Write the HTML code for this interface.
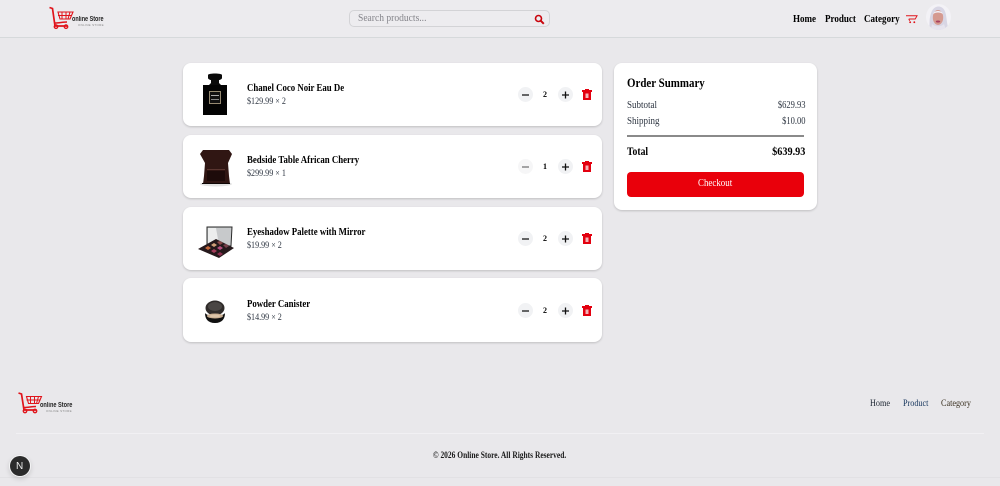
<!DOCTYPE html>
<html lang="en"><head><meta charset="utf-8"><title>Online Store</title>
<style>
*{box-sizing:border-box}
html,body{margin:0;padding:0}
body{width:1000px;height:486px;overflow:hidden;background:#e9e8eb;position:relative;font-family:"Liberation Serif",serif;color:#000}
.t{position:absolute;white-space:nowrap;line-height:1;transform-origin:0 50%}
.r{transform-origin:100% 50%}
header{position:absolute;left:0;top:0;width:1000px;height:38px;background:#ecebee;border-bottom:1px solid #d6d9db}
.search{position:absolute;left:349px;top:10px;width:201px;height:17px;border:1px solid #d3d3d6;border-radius:5px;background:#edecef}
.card{position:absolute;left:183px;width:419px;background:#fff;border-radius:8px;box-shadow:0 1px 2px rgba(0,0,0,.18)}
.sum{position:absolute;left:614px;top:63px;width:203px;height:147px;background:#fff;border-radius:8px;box-shadow:0 1px 2px rgba(0,0,0,.18)}
.n{font-weight:700;font-size:10px;transform:scaleX(.88)}
.p{font-size:9.5px;color:#2c3440;transform:scaleX(.85)}
.b{position:absolute;width:15px;height:15px;border-radius:50%;background:#f1f2f4}
svg{position:absolute;display:block}
.rule{position:absolute;height:1px;background:#f1f0f3}
.q{font-size:8px;font-weight:700}
</style></head><body>
<header></header>
<svg style="left:48px;top:6px" width="26" height="24" viewBox="0 0 26 24" fill="none" stroke="#e0141b"><path d="M1.500 1.500l3 1 2.500 17.500h12" stroke-width="1.700"/><path d="M7 17c4 0 8-1 12-1" stroke-width="1.500"/><path d="M10 6h15l-3 7H12z" stroke-width="1.100"/><path d="M14 6l0 7M18 6l0 7M22 6l-2 7M10 9.500h14" stroke-width="1"/><circle cx="8" cy="20.700" r="1.700" stroke-width="1.400"/><circle cx="18" cy="20.700" r="1.700" stroke-width="1.400"/></svg>
<span class="t" style="left:72px;top:16px;font:700 7px 'Liberation Sans',sans-serif;color:#222;transform:scaleX(.78)">online Store</span>
<span class="t" style="left:78px;top:23px;font:3px 'Liberation Sans',sans-serif;color:#888;letter-spacing:.3px">ONLINE STORE</span>
<div class="search"></div>
<span class="t" style="left:358px;top:14px;font-size:10.500px;color:#85858b;transform:scaleX(.91)">Search products...</span>
<svg style="left:534px;top:14px" width="11" height="11" viewBox="0 0 11 11" fill="none" stroke="#c9060e" stroke-width="1.600"><circle cx="4.500" cy="4.500" r="3"/><path d="M6.800 6.800l3 3" stroke-width="2"/></svg>
<span class="t n" style="left:793px;top:15px;font-size:10.500px;transform:scaleX(.86)">Home</span>
<span class="t n" style="left:825px;top:15px;font-size:10.500px;transform:scaleX(.86)">Product</span>
<span class="t n" style="left:864px;top:15px;font-size:10.500px;transform:scaleX(.86)">Category</span>
<svg style="left:906px;top:14px" width="12" height="10" viewBox="0 0 13 10" fill="none" stroke="#e0141b"><path d="M0 1.500h12L10 5H3" stroke-width="1"/><path d="M3 5l1 2" stroke-width="1"/><circle cx="4.500" cy="8.500" r="1" fill="#e0141b" stroke="none"/><circle cx="9" cy="8.500" r="1" fill="#e0141b" stroke="none"/></svg>
<svg style="left:926px;top:4px" width="25" height="26" viewBox="0 0 25 26"><defs><clipPath id="c"><ellipse cx="12.500" cy="13" rx="12.500" ry="13"/></clipPath></defs><g clip-path="url(#c)"><rect width="25" height="26" fill="#f3f2f6"/><path d="M3 26c1-6 0-10 1.500-15C6 5 9 2.500 12.500 2.500S19 5 20 11c1 6 1 10 3 15z" fill="#d8d6e4"/><ellipse cx="12" cy="13.500" rx="5.200" ry="7.500" fill="#d59a90"/><path d="M7 10c1-4 9-4 10 0-3-2-7-2-10 0z" fill="#f1eff5"/><ellipse cx="12" cy="17.500" rx="2.200" ry="1" fill="#a83f5f"/><path d="M6 20c3 3 9 3 12 0l2 6H5z" fill="#e6e4ee"/></g></svg>

<div class="card" style="top:63px;height:63px"></div>
<div class="card" style="top:135px;height:63px"></div>
<div class="card" style="top:207px;height:63px"></div>
<div class="card" style="top:278px;height:64px"></div>

<svg style="left:200px;top:70px" width="30" height="48" viewBox="0 0 30 48"><path d="M8 5c0-2 14-2 14 0v3c0 1-2 2-3 2v3l2 2H9l2-2v-3c-1 0-3-1-3-2z" fill="#0a0a0a"/><rect x="3" y="15" width="24" height="30" fill="#030303"/><rect x="9.500" y="21.500" width="11" height="12" fill="#111" stroke="#b9ac8c" stroke-width=".8"/><rect x="11" y="25" width="8" height="1" fill="#aaa"/><rect x="11" y="29" width="8" height="1" fill="#888"/></svg>
<svg style="left:198px;top:148px" width="36" height="40" viewBox="0 0 36 40"><ellipse cx="18" cy="36" rx="16" ry="2.500" fill="#e2e2e2"/><path d="M2 6l3-4h26l3 4-4 9 1 13 1 8H5l1-8 1-13z" fill="#301613"/><rect x="9" y="21" width="18" height="1" fill="#5a3530"/><rect x="9" y="23" width="18" height="10" fill="#1d0b0a"/><path d="M4 35h28v1H4z" fill="#0e0605"/></svg>
<svg style="left:197px;top:225px" width="38" height="34" viewBox="0 0 38 34"><path d="M10 2h25l-1 19H10z" fill="#c7c9cb" stroke="#2a2a2a" stroke-width="1"/><path d="M11 3l8 0 3 17-11 0z" fill="#eceded"/><path d="M1 24l18-10 18 9-15 10z" fill="#26191c"/><path d="M8 23l3-2 3 2-3 2z" fill="#c4683b"/><path d="M14 20l3-2 3 2-3 2z" fill="#d0a078"/><path d="M20 17l3-1 3 2-3 2z" fill="#8a4a4a"/><path d="M14 26l3-2 3 2-3 2z" fill="#a43c5a"/><path d="M20 23l3-2 3 2-3 2z" fill="#b84f80"/><path d="M26 20l3-1 3 2-3 2z" fill="#77404a"/><path d="M20 29l3-2 3 2-3 2z" fill="#8c2f50"/></svg>
<svg style="left:203px;top:298px" width="24" height="28" viewBox="0 0 24 28"><ellipse cx="12" cy="10" rx="9.500" ry="7.500" fill="#2f2b2a"/><ellipse cx="12" cy="8.500" rx="7" ry="4.500" fill="#4a4644"/><path d="M2 15c0 6 3 10 10 10s10-4 10-10c-3 4-17 4-20 0z" fill="#101010"/><ellipse cx="12" cy="18" rx="8" ry="2.500" fill="#c8ad90"/><ellipse cx="12" cy="18" rx="5.500" ry="1.500" fill="#dcc4a8"/></svg>

<span class="t n" style="left:247px;top:84px">Chanel Coco Noir Eau De</span><span class="t p" style="left:247px;top:98px">$129.99 × 2</span>
<span class="t n" style="left:247px;top:156px">Bedside Table African Cherry</span><span class="t p" style="left:247px;top:170px">$299.99 × 1</span>
<span class="t n" style="left:247px;top:228px">Eyeshadow Palette with Mirror</span><span class="t p" style="left:247px;top:242px">$19.99 × 2</span>
<span class="t n" style="left:247px;top:300px">Powder Canister</span><span class="t p" style="left:247px;top:314px">$14.99 × 2</span>

<div class="b" style="left:518px;top:87px"></div><div class="b" style="left:558px;top:87px"></div>
<div class="b" style="left:518px;top:159px;background:#f6f6f7"></div><div class="b" style="left:558px;top:159px"></div>
<div class="b" style="left:518px;top:231px"></div><div class="b" style="left:558px;top:231px"></div>
<div class="b" style="left:518px;top:303px"></div><div class="b" style="left:558px;top:303px"></div>
<svg style="left:500px;top:60px" width="100" height="270" viewBox="0 0 100 270" fill="none" stroke="#111" stroke-width="1.300">
<path d="M22 35h7M62 35h7M65.500 31.500v7"/><path d="M22 107h7" stroke="#777"/><path d="M62 107h7M65.500 103.500v7"/><path d="M22 179h7M62 179h7M65.500 175.500v7"/><path d="M22 251h7M62 251h7M65.500 247.500v7"/>
<g fill="#e3000f" stroke="none"><path d="M85 29h4v1h3v2h-10v-2h3zM83 32h8v8h-8z"/><rect x="85.500" y="33.500" width="3" height="4.500" fill="#f4b5b8"/></g>
<g transform="translate(0 72)" fill="#e3000f" stroke="none"><path d="M85 29h4v1h3v2h-10v-2h3zM83 32h8v8h-8z"/><rect x="85.500" y="33.500" width="3" height="4.500" fill="#f4b5b8"/></g>
<g transform="translate(0 144)" fill="#e3000f" stroke="none"><path d="M85 29h4v1h3v2h-10v-2h3zM83 32h8v8h-8z"/><rect x="85.500" y="33.500" width="3" height="4.500" fill="#f4b5b8"/></g>
<g transform="translate(0 216)" fill="#e3000f" stroke="none"><path d="M85 29h4v1h3v2h-10v-2h3zM83 32h8v8h-8z"/><rect x="85.500" y="33.500" width="3" height="4.500" fill="#f4b5b8"/></g>
</svg>
<span class="t q" style="left:543px;top:91px">2</span>
<span class="t q" style="left:543px;top:163px">1</span>
<span class="t q" style="left:543px;top:235px">2</span>
<span class="t q" style="left:543px;top:307px">2</span>

<div class="sum"></div>
<span class="t" style="left:627px;top:76px;font-size:13px;font-weight:700;transform:scaleX(.84)">Order Summary</span>
<span class="t p" style="left:627px;top:101px;font-size:10px;transform:scaleX(.9)">Subtotal</span><span class="t p r" style="right:195px;top:101px;font-size:10px">$629.93</span>
<span class="t p" style="left:627px;top:117px;font-size:10px;transform:scaleX(.9)">Shipping</span><span class="t p r" style="right:195px;top:117px;font-size:10px">$10.00</span>
<div style="position:absolute;left:627px;top:135px;width:177px;height:2px;background:#8a8a8a"></div>
<span class="t" style="left:627px;top:147px;font-size:11.500px;font-weight:700;transform:scaleX(.84)">Total</span><span class="t r" style="right:195px;top:147px;font-size:11.500px;font-weight:700;transform:scaleX(.89)">$639.93</span>
<div style="position:absolute;left:627px;top:172px;width:177px;height:25px;background:#e9000b;border-radius:4px"></div>
<span class="t" style="left:698px;top:179px;font-size:10.500px;color:#fff;transform:scaleX(.85)">Checkout</span>

<svg style="left:17px;top:392px" width="26" height="24" viewBox="0 0 26 24" fill="none" stroke="#e0141b"><path d="M1.500 1l3 1 2.500 16h12" stroke-width="1.700"/><path d="M7 15.500c4 0 8-1 12-1" stroke-width="1.500"/><path d="M9.500 4.500h15l-3 7h-10z" stroke-width="1.100"/><path d="M13.500 4.500v7M17.500 4.500v7M21.500 4.500l-2 7M9.500 8h14" stroke-width="1"/><circle cx="8" cy="19" r="1.700" stroke-width="1.400"/><circle cx="18" cy="19" r="1.700" stroke-width="1.400"/></svg>
<span class="t" style="left:40px;top:402px;font:700 7px 'Liberation Sans',sans-serif;color:#222;transform:scaleX(.8)">online Store</span>
<span class="t" style="left:46px;top:409px;font:3px 'Liberation Sans',sans-serif;color:#888;letter-spacing:.3px">ONLINE STORE</span>
<span class="t" style="left:870px;top:400px;font-size:9.500px;color:#1b2430;transform:scaleX(.86)">Home</span>
<span class="t" style="left:903px;top:400px;font-size:9.500px;color:#12325a;transform:scaleX(.86)">Product</span>
<span class="t" style="left:941px;top:400px;font-size:9.500px;color:#3a3020;transform:scaleX(.86)">Category</span>
<div class="rule" style="left:16px;top:433px;width:968px"></div>
<span class="t" style="left:433px;top:451px;font-size:9px;font-weight:700;color:#1a1a1a;transform:scaleX(.83)">© 2026 Online Store. All Rights Reserved.</span>
<div style="position:absolute;left:0;top:477px;width:1000px;height:1px;background:#e2e1e4"></div>
<div style="position:absolute;left:10px;top:456px;width:20px;height:20px;border-radius:50%;background:#2b2b2b;box-shadow:0 0 0 1px #f4f4f5,0 2px 6px rgba(0,0,0,.2)"></div>
<span class="t" style="left:16px;top:461px;font:400 10px 'Liberation Sans',sans-serif;color:#eee">N</span>
</body></html>
